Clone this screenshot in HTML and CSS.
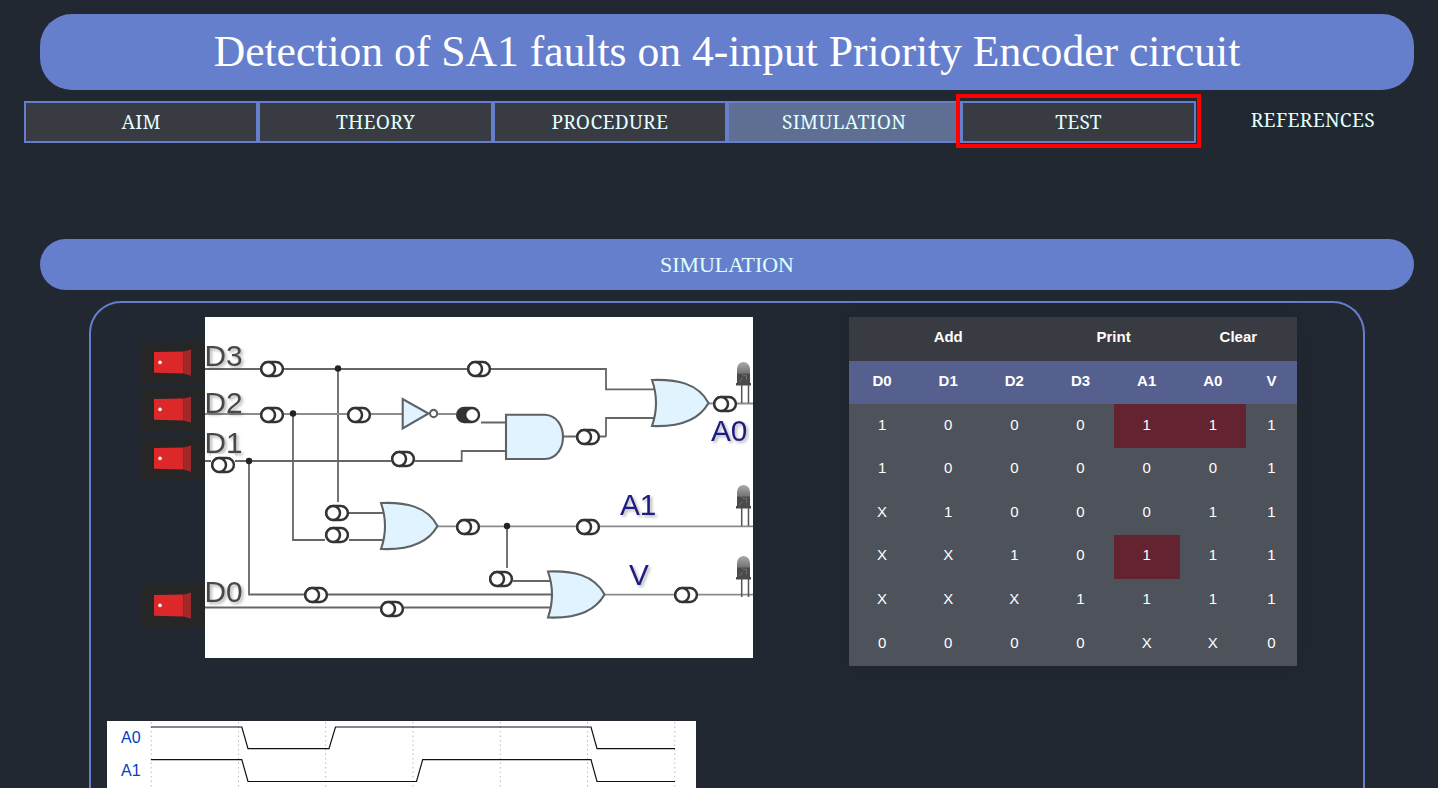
FILE: index.html
```html
<!DOCTYPE html>
<html lang="en">
<head>
<meta charset="utf-8">
<title>Detection of SA1 faults on 4-input Priority Encoder circuit</title>
<link rel="stylesheet" href="styles.css">
</head>
<body>
<header class="title">Detection of SA1 faults on 4-input Priority Encoder circuit</header>
<nav class="tabs">
  <a class="tab">AIM</a>
  <a class="tab">THEORY</a>
  <a class="tab">PROCEDURE</a>
  <a class="tab active">SIMULATION</a>
  <a class="tab marked">TEST</a>
  <a class="tab plain">REFERENCES</a>
</nav>
<h2 class="section">SIMULATION</h2>
<main class="panel">
  <div class="top">
    <svg class="circuit" width="613" height="341" viewBox="140 317 613 341">
      <defs>
        <linearGradient id="ledg" x1="0" y1="0" x2="0" y2="1"><stop offset="0" stop-color="#aaa"/><stop offset=".5" stop-color="#777"/><stop offset=".6" stop-color="#484848"/><stop offset="1" stop-color="#4c4c4c"/></linearGradient>
        <g id="off"><rect x="-12" y="-11" width="24" height="22" fill="#fff"/><rect x="-10.700" y="-6.900" width="21.600" height="13.800" rx="6.900" fill="none" stroke="#333" stroke-width="2.500"/><circle cx="-3.900" cy="0" r="6.900" fill="#fff" stroke="#333" stroke-width="2.500"/></g>
        <g id="on"><rect x="-12" y="-11" width="24" height="22" fill="#fff"/><rect x="-12" y="-8.150" width="24.200" height="16.300" rx="8.150" fill="#333"/><circle cx="4.100" cy="0" r="5.700" fill="#fff"/></g>
        <g id="switch"><rect x="140.500" y="341.500" width="64.500" height="42.500" fill="#262626"/><path d="M154 352L183.500 351.500V373.500L154 372.700Z" fill="#dc2829"/><path d="M183.500 351.500L191 349.500V375.700L183.500 373.500Z" fill="#a02a2b"/><circle cx="160" cy="362.400" r="1.800" fill="#fff"/></g>
        <g id="led"><path d="M-6.500 21V7a6.500 7 0 0 1 13 0V21z" fill="url(#ledg)"/><path d="M-3 9l3 5 3-1v5M-4 20l3-4" fill="none" stroke="#777" stroke-width=".8"/><path d="M-7.500 21H7.500V23.500H-7.500z" fill="#4a4a4a"/><path d="M-1.800 23V41M5 23V41" stroke="#555" stroke-width="1.500"/></g>
        <path id="or" d="M0 0C24-1 46 3 56.500 23C46 42 24 47 0 46Q8 23 0 0Z"/>
      </defs>
      <rect x="205" y="317" width="548" height="341" fill="#fff"/>
      <g class="wires">
        <path d="M205 369H606V389.300H655M606 436.500V418H655M563 436.500H606M205 461H461.700V451H506M249 461V594.500H551M205 607.500H551M293 414V540H384M338 369V502M340 513H384M507 526V568M503 581H551M481 422.500H506"/>
        <path class="light" d="M205 414H403M437 414H457M438 526.300H753M604 594.700H753M708 403.500H753"/>
      </g>
      <g class="gates">
        <path d="M402.700 399V428.500L428.500 413.500Z"/><circle cx="433.600" cy="413.500" r="3.600"/>
        <path d="M506 414.700H545C569 416 569 458 545 459H506Z"/>
        <use href="#or" x="652" y="380"/><use href="#or" x="381" y="503"/><use href="#or" x="548" y="571.500"/>
      </g>
      <g fill="#222"><circle cx="338" cy="368.500" r="3.200"/><circle cx="293" cy="413.500" r="3.200"/><circle cx="249" cy="461" r="3.200"/><circle cx="507" cy="526" r="3.200"/></g>
      <g class="label"><text x="204.500" y="365.500">D3</text><text x="204.500" y="412.500">D2</text><text x="204.500" y="453">D1</text><text x="204.500" y="602">D0</text></g>
      <g class="label out"><text x="711" y="441">A0</text><text x="620" y="515">A1</text><text x="629" y="585">V</text></g>
      <use href="#led" x="743.500" y="362"/><use href="#led" x="743.500" y="485"/><use href="#led" x="743.500" y="556"/>
      <use href="#off" x="272" y="369"/><use href="#off" x="479" y="369"/><use href="#off" x="272" y="415"/><use href="#off" x="359" y="415"/><use href="#on" x="468" y="415"/><use href="#off" x="403" y="459"/><use href="#off" x="223" y="465"/><use href="#off" x="588" y="437"/><use href="#off" x="725" y="404"/><use href="#off" x="337" y="513"/><use href="#off" x="337" y="535"/><use href="#off" x="468" y="527"/><use href="#off" x="588" y="527"/><use href="#off" x="501" y="579"/><use href="#off" x="316" y="595"/><use href="#off" x="392" y="609"/><use href="#off" x="686" y="595"/>
      <use href="#switch"/><use href="#switch" y="47"/><use href="#switch" y="96"/><use href="#switch" y="243"/>
    </svg>
    <table class="truth">
      <colgroup><col class="c"><col class="c"><col class="c"><col class="c"><col class="c"><col class="c"><col></colgroup>
      <tr class="actions"><th colspan="3">Add</th><th colspan="2">Print</th><th colspan="2">Clear</th></tr>
      <tr class="names"><th>D0</th><th>D1</th><th>D2</th><th>D3</th><th>A1</th><th>A0</th><th>V</th></tr>
      <tr><td>1</td><td>0</td><td>0</td><td>0</td><td class="bad">1</td><td class="bad">1</td><td>1</td></tr>
      <tr><td>1</td><td>0</td><td>0</td><td>0</td><td>0</td><td>0</td><td>1</td></tr>
      <tr><td>X</td><td>1</td><td>0</td><td>0</td><td>0</td><td>1</td><td>1</td></tr>
      <tr><td>X</td><td>X</td><td>1</td><td>0</td><td class="bad">1</td><td>1</td><td>1</td></tr>
      <tr><td>X</td><td>X</td><td>X</td><td>1</td><td>1</td><td>1</td><td>1</td></tr>
      <tr><td>0</td><td>0</td><td>0</td><td>0</td><td>X</td><td>X</td><td>0</td></tr>
    </table>
  </div>
  <svg class="waves" width="589" height="67" viewBox="107 721 589 67">
    <rect x="107" y="721" width="589" height="67" fill="#fff"/>
    <path class="grid" d="M151.200 722V788M238.500 722V788M325.700 722V788M413 722V788M500.300 722V788M587.500 722V788M674.800 722V788"/>
    <path class="trace" d="M151 727H241.800L248 748.600H329L335.500 727H591L597 748.600H675M151 759.700H241.800L248 781.500H416.500L422.700 759.700H591L597 781.500H675"/>
    <text x="121" y="743">A0</text><text x="121" y="776">A1</text>
  </svg>
</main>
</body>
</html>
```
FILE: styles.css
```css
* { box-sizing: border-box; }
body { display: flow-root; margin: 0; background: #222831; color: #fff; font-family: "Liberation Serif", serif; }
.title { margin: 14px 24px 0 40px; height: 76px; line-height: 74px; border-radius: 32px; background: #667fcc; text-align: center; font-size: 43.6px; }
.tabs { display: grid; grid-template-columns: repeat(6, 1fr); margin: 11px 8px 0 24px; height: 42px; }
.tab { position: relative; border: 2px solid #667fcc; background: #393b42; color: #e0ffff; text-align: center; font: 19.2px/38px "Noto Serif", "Liberation Serif", serif; letter-spacing: .3px; }
.tab.active { background: #5e6f93; }
.tab.plain { border: 0; background: none; }
.tab.marked::after { content: ""; position: absolute; inset: -9px -7px -7px; border: 4px solid #f00; z-index: 1; }
.section { margin: 96px 24px 0 40px; height: 51px; line-height: 52px; border-radius: 26px; background: #667fcc; color: #e0ffff; text-align: center; font-size: 21.9px; font-weight: 400; }
.panel { margin: 11px 73px 0 89px; height: 487px; border: 2px solid #667fcc; border-bottom: 0; border-radius: 32px 32px 0 0; padding: 14px 16px 0; }
.top { display: flex; gap: 96px; padding-left: 33px; height: 404px; align-items: flex-start; }
.circuit, .waves { display: block; flex: none; }
.wires path { fill: none; stroke: #666; stroke-width: 1.8; }
.wires .light { stroke: #8c8c8c; }
.wires, .gates { filter: blur(.35px); }
.gates { fill: #e1f3fe; stroke: #5c6266; stroke-width: 2.1; }
.gates circle { fill: #fff; }
.label { font: 29.8px "Liberation Sans", sans-serif; fill: #484848; filter: drop-shadow(2px 2px 1.5px rgba(0, 0, 0, .3)); }
.label.out { fill: #1c1c84; }
.truth { width: 448px; height: 349px; table-layout: fixed; border-collapse: collapse; background: #4e535b; font: 15px/17px "Liberation Sans", sans-serif; text-align: center; box-shadow: 0 0 20px rgba(0, 0, 0, .15); }
.truth th, .truth td { padding: 0 0 4px; }
.c { width: 66.15px; }
.actions { background: #393b42; }
.names { background: #55608f; }
.bad { background: #642330; }
.waves text { font: 16px "Liberation Sans", sans-serif; fill: #0041c4; }
.grid { stroke: #bbb; stroke-dasharray: 1.5 3; }
.trace { fill: none; stroke: #111; stroke-width: 1.2; }
```
